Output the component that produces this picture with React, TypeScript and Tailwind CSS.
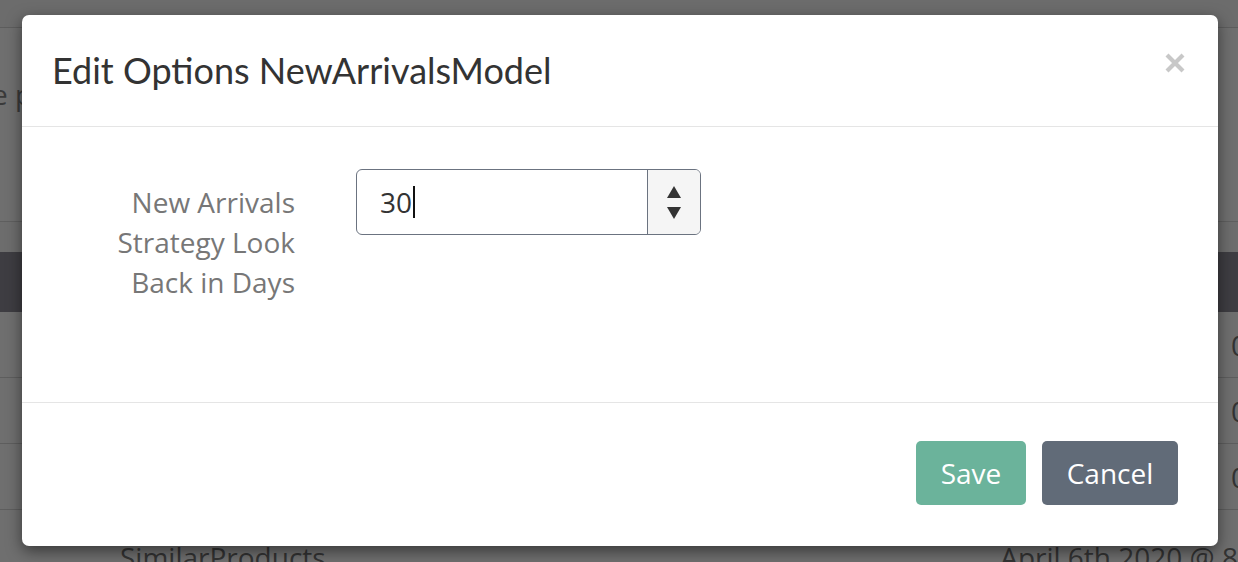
import React from "react";

const rows = ["0", "0", "0"];

const SpinArrows = () => (
  <div className="flex flex-col items-center justify-center gap-[9px] w-[53px] h-full bg-[#f5f5f5] border-l border-[#6b7380] rounded-r-[5px]">
    <svg width="14" height="12" viewBox="0 0 14 12">
      <path d="M7 0 L14 12 L0 12 Z" fill="#333" />
    </svg>
    <svg width="14" height="12" viewBox="0 0 14 12">
      <path d="M0 0 L14 0 L7 12 Z" fill="#333" />
    </svg>
  </div>
);

const App = () => {
  return (
    <div className="relative w-[1238px] h-[562px] overflow-hidden bg-[#6f6f6f] font-['Open_Sans',sans-serif]">
      {/* page behind the overlay */}
      <div className="h-[28px] bg-[#6c6c6c] border-b border-[#5d5d5d]" />
      <div className="h-[193px] pt-[48px] text-[28px] text-[#3a3a3a] leading-[36px] -ml-[8px]">
        e p
      </div>
      <div className="h-[31px] border-t border-[#5f5f5f] bg-[#6d6d6d]" />
      <div className="h-[60px] bg-[#3e3d42]" />
      {rows.map((r, i) => (
        <div
          key={i}
          className="h-[66px] border-b border-[#5e5e5e] flex items-center justify-end text-[28px] text-[#333]"
        >
          <span className="-mr-[9px]">{r}</span>
        </div>
      ))}
      <div className="flex pl-[120px] pt-[32px] text-[28px] text-[#333] leading-[30px] whitespace-nowrap">
        <span className="w-[885px]">SimilarProducts</span>
        <span>April 6th 2020 @ 8</span>
      </div>

      {/* modal */}
      <div className="absolute left-[22px] top-[15px] w-[1196px] h-[531px] bg-white rounded-[7px] shadow-[0_5px_15px_rgba(0,0,0,0.5)] flex flex-col">
        <div className="h-[112px] border-b border-[#e5e5e5] flex items-center justify-between pl-[30px] pr-[33px]">
          <h4 className="font-['Lato',sans-serif] text-[36px] text-[#333] pb-[2px]">
            Edit Options NewArrivalsModel
          </h4>
          <svg width="20" height="20" viewBox="0 0 20 20" className="mb-[16px]">
            <path d="M2 2 L18 18 M18 2 L2 18" stroke="#c8c8c8" strokeWidth="4.2" />
          </svg>
        </div>

        <div className="h-[276px] border-b border-[#e5e5e5] flex items-start pt-[42px]">
          <div className="w-[273px] pt-[13px] text-right text-[28px] leading-[40px] text-[#777]">
            <div>New Arrivals</div>
            <div>Strategy Look</div>
            <div>Back in Days</div>
          </div>
          <div className="ml-[61px] w-[345px] h-[66px] border border-[#6b7380] rounded-[6px] flex">
            <div className="flex-1 flex items-center pl-[23px] text-[28px] text-[#333]">
              <span>30</span>
              <span className="w-[2px] h-[32px] bg-[#111] ml-[1px]" />
            </div>
            <SpinArrows />
          </div>
        </div>

        <div className="flex-1 flex items-start justify-end gap-[16px] pt-[38px] pr-[40px]">
          <button className="w-[110px] h-[64px] rounded-[5px] bg-[#6bb39b] text-white text-[28px]">
            Save
          </button>
          <button className="w-[136px] h-[64px] rounded-[5px] bg-[#616b78] text-white text-[28px]">
            Cancel
          </button>
        </div>
      </div>
    </div>
  );
};

export default App;
